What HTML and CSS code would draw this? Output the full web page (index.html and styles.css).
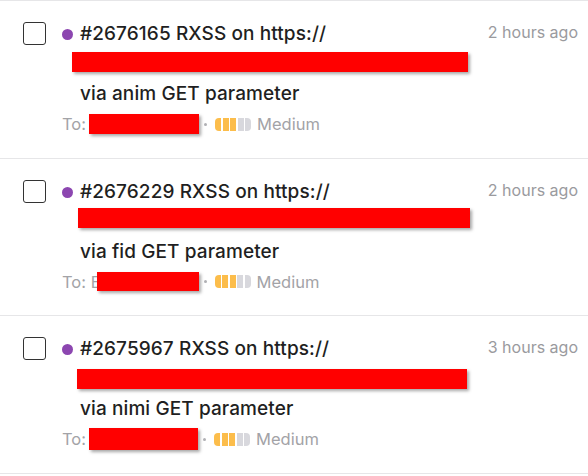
FILE: index.html
```html
<!DOCTYPE html>
<html>
<head>
<meta charset="utf-8">
<link rel="stylesheet" href="styles.css">
</head>
<body>
<div class="list">
  <div class="row">
    <div class="check"><span class="box"></span></div>
    <div class="main">
      <div class="head">
        <span class="dot"></span>
        <div class="title">
          <div class="line">#2676165 RXSS on https://</div>
          <div class="line redline"><span class="redact r1"></span></div>
          <div class="line">via anim GET parameter</div>
        </div>
        <div class="time">2 hours ago</div>
      </div>
      <div class="meta">
        <span class="to">To:</span><span class="redact m1"></span><span class="sep"></span>
        <span class="sev"><i class="on"></i><i class="on"></i><i class="on"></i><i></i><i></i></span>
        <span class="level">Medium</span>
      </div>
    </div>
  </div>
  <div class="row">
    <div class="check"><span class="box"></span></div>
    <div class="main">
      <div class="head">
        <span class="dot"></span>
        <div class="title">
          <div class="line">#2676229 RXSS on https://</div>
          <div class="line redline"><span class="redact r2"></span></div>
          <div class="line">via fid GET parameter</div>
        </div>
        <div class="time">2 hours ago</div>
      </div>
      <div class="meta">
        <span class="to">To: E</span><span class="redact m2"></span><span class="sep"></span>
        <span class="sev"><i class="on"></i><i class="on"></i><i class="on"></i><i></i><i></i></span>
        <span class="level">Medium</span>
      </div>
    </div>
  </div>
  <div class="row">
    <div class="check"><span class="box"></span></div>
    <div class="main">
      <div class="head">
        <span class="dot"></span>
        <div class="title">
          <div class="line">#2675967 RXSS on https://</div>
          <div class="line redline"><span class="redact r3"></span></div>
          <div class="line">via nimi GET parameter</div>
        </div>
        <div class="time">3 hours ago</div>
      </div>
      <div class="meta">
        <span class="to">To:</span><span class="redact m3"></span><span class="sep"></span>
        <span class="sev"><i class="on"></i><i class="on"></i><i class="on"></i><i></i><i></i></span>
        <span class="level">Medium</span>
      </div>
    </div>
  </div>
</div>
</body>
</html>
```
FILE: styles.css
```css
* { box-sizing: border-box; }
html, body { margin: 0; padding: 0; background: #fff; }
body {
  font-family: Inter, "Open Sans", sans-serif;
  color: #1f1f22;
  width: 588px;
  height: 476px;
  overflow: hidden;
}
.list { border-top: 1px solid #e6e6e8; }
.row {
  display: flex;
  height: 157.5px;
  border-bottom: 1px solid #e6e6e8;
  padding: 21px 10px 0 23px;
}
.check { width: 39px; flex: none; }
.box {
  display: block;
  width: 23px;
  height: 23px;
  border: 1.5px solid #333;
  border-radius: 3px;
}
.main { flex: 1; display: flex; flex-direction: column; }
.head { display: flex; align-items: flex-start; }
.dot {
  flex: none;
  width: 11px;
  height: 11px;
  border-radius: 50%;
  background: #8c46b0;
  margin: 7px 7px 0 0;
}
.title {
  flex: 1;
  font-size: 19px;
  font-weight: 500;
  letter-spacing: 0.1px;
  line-height: 30px;
  margin-top: -3px;
}
.line { height: 30px; white-space: nowrap; }
.redline { position: relative; }
.redact {
  background: #ff0000;
  box-shadow: 2px 2px 3px rgba(0,0,0,0.35);
  display: inline-block;
}
.redline .redact { position: absolute; top: 3px; height: 20px; }
.r1 { left: -8px; width: 396px; }
.r2 { left: -2px; width: 392px; top: 1px !important; }
.r3 { left: -3px; width: 390px; top: 5px !important; }
.time {
  flex: none;
  color: #9a9a9e;
  font-size: 16px;
  line-height: 20px;
}
.meta {
  display: flex;
  align-items: center;
  margin-top: 4px;
  height: 22px;
  font-size: 16.5px;
  color: #a3a3a7;
}
.to { margin-right: 3px; }
.m1 { width: 110px; height: 20px; }
.m2 { width: 102px; height: 19px; margin-left: -7px; }
.m3 { width: 109px; height: 22px; }
.sep {
  width: 3px; height: 3px; border-radius: 50%;
  background: #b0b0b4;
  margin: 0 8px 0 5px;
}
.sev { display: flex; gap: 1.5px; margin-right: 6px; }
.sev i {
  display: block;
  width: 6px;
  height: 13px;
  background: #d8d8dd;
}
.sev i.on { background: #fcbd4b; }
.sev i:first-child { border-radius: 4px 0 0 4px; }
.sev i:last-child { border-radius: 0 4px 4px 0; }
```
